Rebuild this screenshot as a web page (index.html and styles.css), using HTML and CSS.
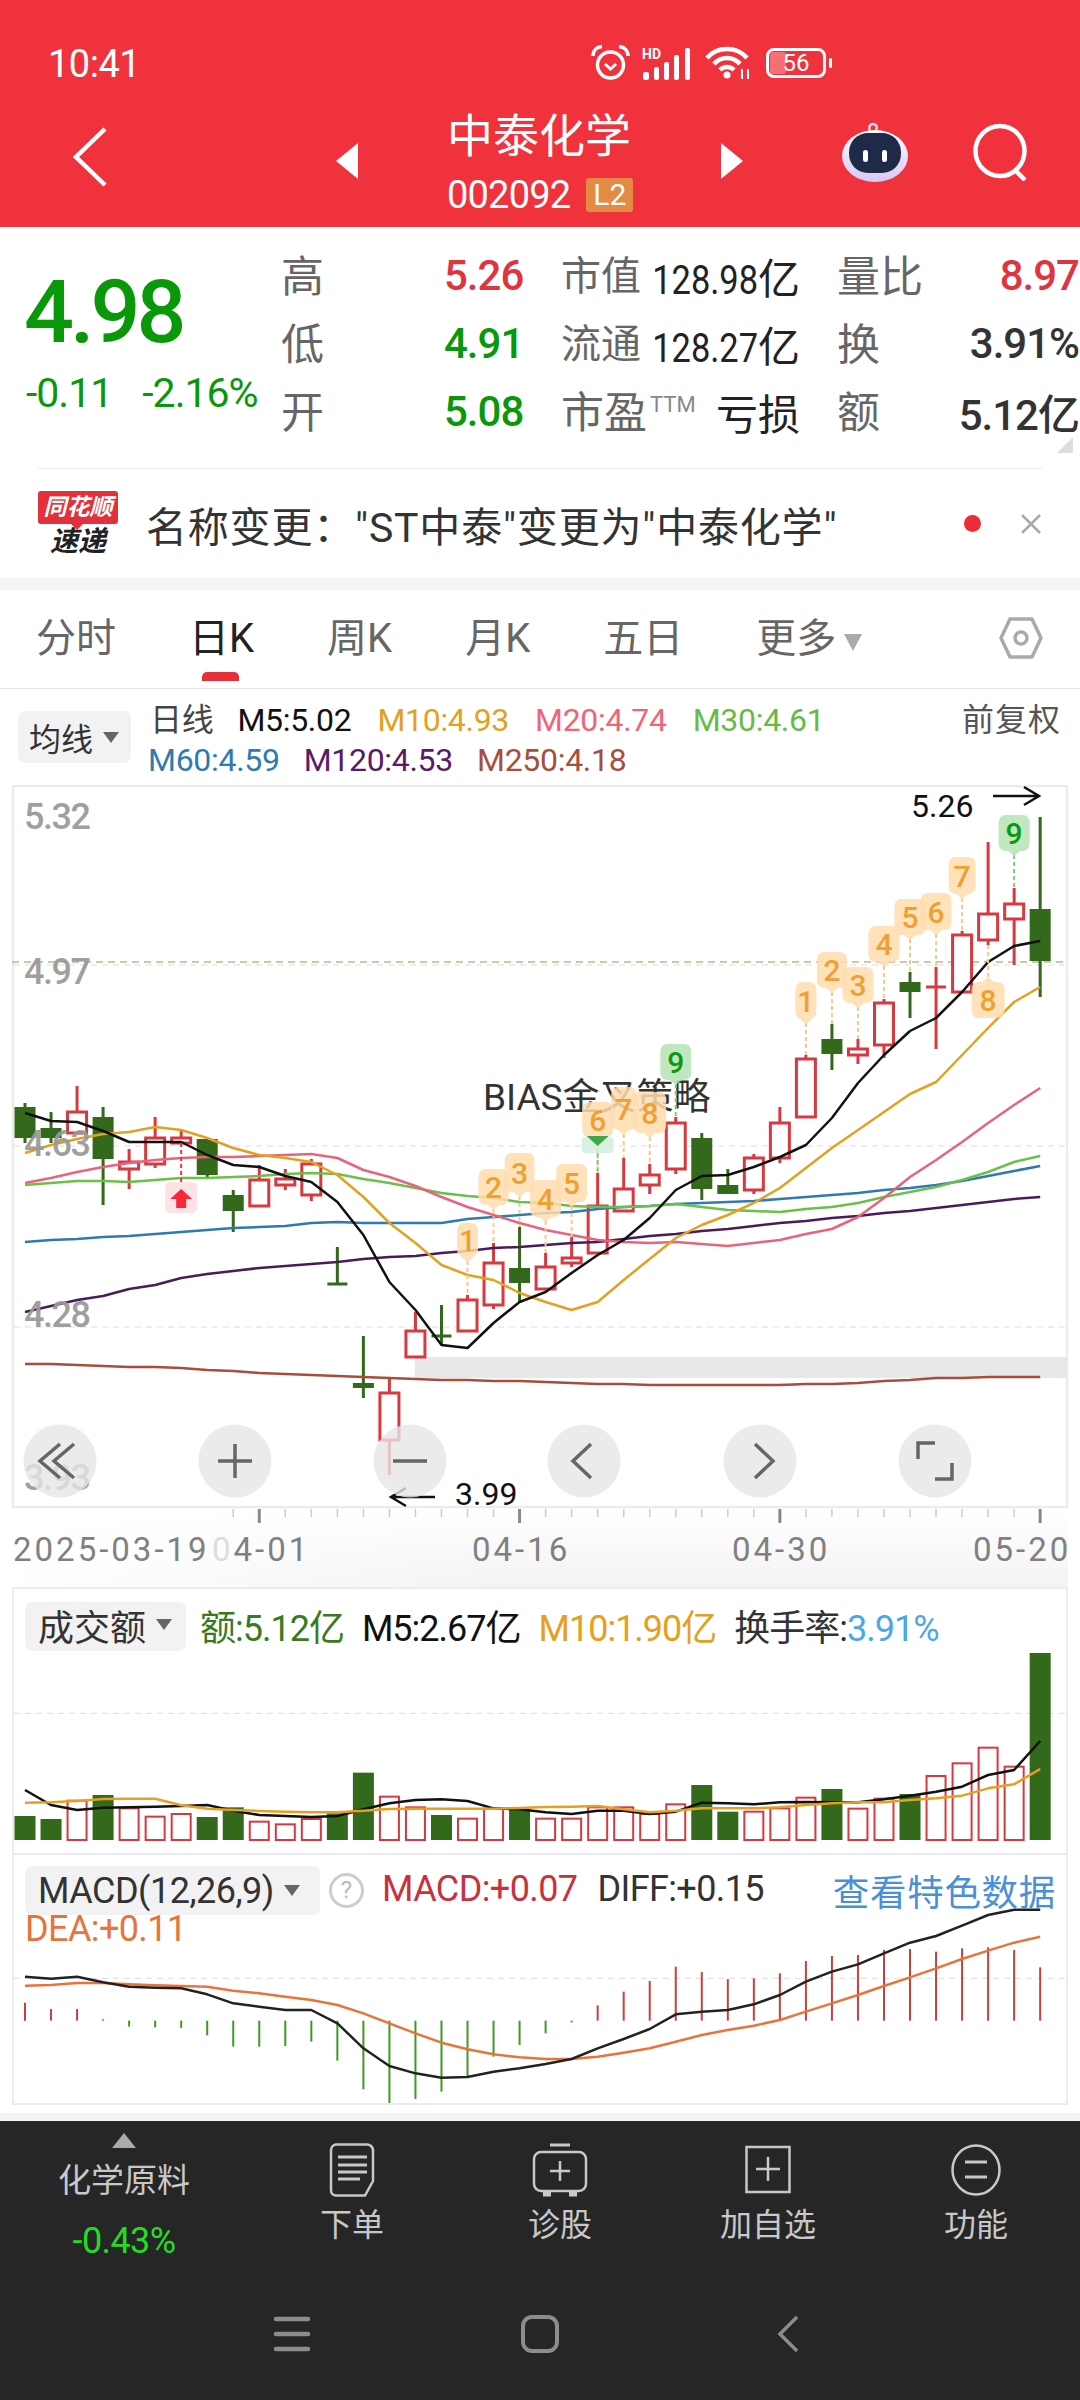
FILE: index.html
```html
<!DOCTYPE html>
<html lang="zh-CN">
<head>
    <meta charset="UTF-8">
    <meta name="viewport" content="width=device-width, initial-scale=1.0">
    <title>中泰化学 002092</title>
    <link rel="stylesheet" href="styles.css">
</head>
<body>
    <header class="top">
        <div class="status-bar">
            <span class="clock">10:41</span>
            <div class="status-icons">
                <svg width="39" height="36" viewBox="0 0 39 36" fill="none" stroke="#fff">
                    <circle cx="19.5" cy="20" r="13" stroke-width="3.5"/>
                    <path d="M14 19l5.5 5 5.5-5" stroke-width="3"/>
                    <path d="M2 11C2 5 6 2 11 1.5M37 11c0-6-4-9-9-9.5" stroke-width="3.5"/>
                </svg>
                <svg width="51" height="33" viewBox="0 0 51 33" fill="#fff">
                    <text x="0" y="12" class="hd">HD</text>
                    <rect x="1" y="25" width="6" height="8" rx="2"/>
                    <rect x="12" y="20" width="5" height="13" rx="2"/>
                    <rect x="22" y="15" width="5" height="18" rx="2"/>
                    <rect x="32" y="8" width="5" height="25" rx="2"/>
                    <rect x="43" y="1" width="5" height="32" rx="2"/>
                </svg>
                <svg width="47" height="34" viewBox="0 0 47 34" fill="none" stroke="#fff" stroke-width="4.5">
                    <path d="M2 12C12 0 32 0 42 12"/>
                    <path d="M9 18c7-8 19-8 26 0"/>
                    <path d="M15 24c4-4 10-4 14 0"/>
                    <circle cx="22" cy="29" r="3.5" fill="#fff" stroke="none"/>
                    <path d="M37 23v10M43 23v10" stroke-width="2"/>
                </svg>
                <div class="battery"><span class="battery-fill"></span><span class="battery-num">56</span></div>
            </div>
        </div>
        <div class="nav-bar">
            <svg class="back" width="36" height="60" viewBox="0 0 36 60" fill="none" stroke="#fff" stroke-width="4.5">
                <path d="M33 2L4 30l29 28"/>
            </svg>
            <span class="tri-left"></span>
            <div class="stock-title">
                <div class="stock-name">中泰化学</div>
                <div class="stock-code">002092<span class="level-tag">L2</span></div>
            </div>
            <span class="tri-right"></span>
            <div class="nav-right">
                <svg width="66" height="60" viewBox="0 0 66 60">
                    <defs>
                        <linearGradient id="robotShell" x1="0" y1="0" x2="0" y2="1">
                            <stop offset="0" stop-color="#ffffff"/>
                            <stop offset="1" stop-color="#d5c8f5"/>
                        </linearGradient>
                    </defs>
                    <path d="M28 9c-2-4 0-7 3-7s5 3 3 6" fill="none" stroke="#f6dce2" stroke-width="2.5"/>
                    <ellipse cx="33" cy="34" rx="33" ry="26" fill="url(#robotShell)"/>
                    <rect x="7" y="11" width="52" height="40" rx="19" fill="#1e2a48"/>
                    <rect x="21" y="28" width="5" height="12" rx="2.5" fill="#fff"/>
                    <rect x="40" y="28" width="5" height="12" rx="2.5" fill="#fff"/>
                </svg>
                <svg width="56" height="58" viewBox="0 0 56 58" fill="none" stroke="#fff" stroke-width="4.5">
                    <ellipse cx="27" cy="28" rx="24.5" ry="25"/>
                    <path d="M42 47l10 10"/>
                </svg>
            </div>
        </div>
    </header>

    <section class="quote">
        <div class="quote-main">
            <div class="quote-left">
                <div class="last-price">4.98</div>
                <div class="price-change"><span>-0.11</span><span>-2.16%</span></div>
            </div>
            <div class="quote-grid">
                <span class="q-label">高</span><span class="q-num up">5.26</span>
                <div class="q-pair"><span class="q-label small">市值</span><span class="q-val"><span class="narrow">128.98</span>亿</span></div>
                <div class="q-pair last"><span class="q-label">量比</span><span class="q-num up">8.97</span></div>

                <span class="q-label">低</span><span class="q-num down">4.91</span>
                <div class="q-pair"><span class="q-label small">流通</span><span class="q-val"><span class="narrow">128.27</span>亿</span></div>
                <div class="q-pair last"><span class="q-label">换</span><span class="q-num">3.91%</span></div>

                <span class="q-label">开</span><span class="q-num down">5.08</span>
                <div class="q-pair"><span class="q-label">市盈<sup class="ttm">TTM</sup></span><span class="q-val">亏损</span></div>
                <div class="q-pair last"><span class="q-label">额</span><span class="q-num">5.12亿</span></div>
            </div>
            <span class="corner-mark"></span>
        </div>
        <div class="quote-rule"></div>
        <div class="news">
            <div class="news-logo">
                <div class="news-logo-tag">同花顺</div>
                <div class="news-logo-sub">速递</div>
            </div>
            <div class="news-text">名称变更："ST中泰"变更为"中泰化学"</div>
            <span class="news-dot"></span>
            <svg class="news-close" width="20" height="20" viewBox="0 0 20 20" stroke="#aaa" stroke-width="2.5">
                <path d="M1 1l18 18M19 1L1 19"/>
            </svg>
        </div>
    </section>

    <div class="gap"></div>

    <nav class="tabs">
        <span class="tab">分时</span>
        <span class="tab active">日K</span>
        <span class="tab">周K</span>
        <span class="tab">月K</span>
        <span class="tab">五日</span>
        <span class="tab more">更多<i class="tab-caret"></i></span>
        <svg class="tab-gear" width="44" height="42" viewBox="0 0 44 42" fill="none" stroke="#aaa" stroke-width="3.5">
            <path d="M11 2h22l9 19-9 19H11L2 21z" stroke-linejoin="round"/>
            <circle cx="22" cy="21" r="6"/>
        </svg>
    </nav>

    <div class="ma-legend">
        <div class="chip ma-chip">均线<i class="chip-caret"></i></div>
        <div class="ma-lines">
            <div class="ma-row">
                <span class="ma-title">日线</span>
                <span class="c-m5">M5:5.02</span>
                <span class="c-m10">M10:4.93</span>
                <span class="c-m20">M20:4.74</span>
                <span class="c-m30">M30:4.61</span>
                <span class="adjust">前复权</span>
            </div>
            <div class="ma-row second">
                <span class="c-m60">M60:4.59</span>
                <span class="c-m120">M120:4.53</span>
                <span class="c-m250">M250:4.18</span>
            </div>
        </div>
    </div>

    <svg class="kline" width="1080" height="802" viewBox="0 785 1080 802">
        <defs>
            <linearGradient id="axisFadeY" x1="0" y1="0" x2="0" y2="1">
                <stop offset="0" stop-color="#ffffff"/>
                <stop offset="1" stop-color="#f3f3f3"/>
            </linearGradient>
            <linearGradient id="axisFadeX" x1="0" y1="0" x2="1" y2="0">
                <stop offset="0" stop-color="#ffffff"/>
                <stop offset="1" stop-color="#ffffff" stop-opacity="0"/>
            </linearGradient>
        </defs>
        <rect x="0" y="1509" width="1068" height="78" fill="url(#axisFadeY)"/>
        <rect x="0" y="1509" width="500" height="78" fill="url(#axisFadeX)"/>
        <rect class="frame" x="13" y="786" width="1054" height="721"/>
        <rect class="band" x="415" y="1357" width="652" height="21"/>
        <line class="grid-line" x1="14" x2="1066" y1="965" y2="965"/>
        <line class="grid-line" x1="14" x2="1066" y1="1146" y2="1146"/>
        <line class="grid-line" x1="14" x2="1066" y1="1327" y2="1327"/>
        <line class="price-line" x1="12" x2="1068" y1="962" y2="962"/>
        <g id="kCandles"></g>
        <g id="kLines"></g>
        <text class="strategy" x="483" y="1110">BIAS金叉策略</text>
        <g id="kMarkers"></g>
        <text class="axis" x="24" y="829">5.32</text>
        <text class="axis" x="24" y="984">4.97</text>
        <text class="axis" x="24" y="1156">4.63</text>
        <text class="axis" x="24" y="1327">4.28</text>
        <text class="axis" x="24" y="1490">3.93</text>
        <text class="extreme" x="911" y="817">5.26</text>
        <path class="arrow" d="M993 796h46m-15-9l15 9-15 9"/>
        <text class="extreme" x="455" y="1505">3.99</text>
        <path class="arrow" d="M435 1497h-44m15-9l-15 9 15 9"/>

        <g class="zoom-btn"><circle cx="60" cy="1461" r="36.5"/><path d="M74 1444l-20 17 20 17M60 1444l-20 17 20 17"/></g>
        <g class="zoom-btn"><circle cx="235" cy="1461" r="36.5"/><path d="M218 1461h34M235 1444v34"/></g>
        <g class="zoom-btn"><circle cx="410" cy="1461" r="36.5"/><path d="M393 1461h34"/></g>
        <g class="zoom-btn"><circle cx="584" cy="1461" r="36.5"/><path d="M591 1444l-18 17 18 17"/></g>
        <g class="zoom-btn"><circle cx="760" cy="1461" r="36.5"/><path d="M755 1444l18 17-18 17"/></g>
        <g class="zoom-btn"><circle cx="935" cy="1461" r="36.5"/><path d="M918 1459v-16h17M952 1463v16h-17"/></g>

        <g id="kTicks"></g>
        <text class="date" x="13" y="1561">2025-03-19</text>
        <text class="date" x="212" y="1561"><tspan class="date-fade">0</tspan>4-01</text>
        <text class="date" x="472" y="1561">04-16</text>
        <text class="date" x="732" y="1561">04-30</text>
        <text class="date" x="973" y="1561">05-20</text>
    </svg>

    <section class="panel">
        <svg id="volumeChart" width="1052" height="264" viewBox="14 1589 1052 264"></svg>
        <div class="panel-head">
            <div class="chip panel-chip">成交额<i class="chip-caret"></i></div>
            <span class="c-vol">额:5.12亿</span>
            <span class="c-m5">M5:2.67亿</span>
            <span class="c-m10">M10:1.90亿</span>
            <span class="c-turn">换手率:<b class="c-rate">3.91%</b></span>
        </div>
    </section>

    <section class="panel macd">
        <svg id="macdChart" width="1052" height="248" viewBox="14 1855 1052 248"></svg>
        <div class="panel-head macd-head">
            <div class="chip panel-chip">MACD(12,26,9)<i class="chip-caret"></i></div>
            <span class="help">?</span>
            <span class="c-macd">MACD:+0.07</span>
            <span class="c-diff">DIFF:+0.15</span>
            <a class="special-data">查看特色数据</a>
        </div>
        <div class="c-dea">DEA:+0.11</div>
    </section>

    <div class="panel-end"></div>
    <div class="gap thin"></div>

    <footer class="bottom">
        <div class="actions">
            <div class="sector">
                <i class="sector-caret"></i>
                <div class="sector-name">化学原料</div>
                <div class="sector-change">-0.43%</div>
            </div>
            <div class="action">
                <svg width="46" height="54" viewBox="0 0 46 54" fill="none" stroke="#c8c8c8" stroke-width="2.5">
                    <path d="M7 1.5h31a6 6 0 0 1 6 6V38l-8 14.5H7a5 5 0 0 1-5-5v-40a6 6 0 0 1 5-6z"/>
                    <path d="M9 14h29M9 22h29M9 29h29M9 36h22" stroke-width="3"/>
                </svg>
                <span>下单</span>
            </div>
            <div class="action">
                <svg width="56" height="54" viewBox="0 0 56 54" fill="none" stroke="#c8c8c8" stroke-width="2.5">
                    <path d="M18 2h20" stroke-width="3"/>
                    <rect x="2" y="9" width="52" height="39" rx="7"/>
                    <path d="M18 28h20M28 18v20"/>
                    <path d="M11 51h8M37 51h8" stroke-width="5"/>
                </svg>
                <span>诊股</span>
            </div>
            <div class="action">
                <svg width="46" height="54" viewBox="0 0 46 54" fill="none" stroke="#c8c8c8" stroke-width="2.5">
                    <rect x="1.5" y="4" width="43" height="45"/>
                    <path d="M11 26h24M23 14v24"/>
                </svg>
                <span>加自选</span>
            </div>
            <div class="action">
                <svg width="50" height="54" viewBox="0 0 50 54" fill="none" stroke="#c8c8c8" stroke-width="2.5">
                    <ellipse cx="25" cy="27" rx="23.5" ry="24.5"/>
                    <path d="M14 19h22M14 34h22" stroke-width="3"/>
                </svg>
                <span>功能</span>
            </div>
        </div>
        <div class="sys-nav">
            <svg width="38" height="36" viewBox="0 0 38 36" stroke="#8c8c8c" stroke-width="4.5" stroke-linecap="round">
                <path d="M3 3h32M3 18h32M3 33h32"/>
            </svg>
            <svg width="38" height="38" viewBox="0 0 38 38" fill="none" stroke="#8c8c8c" stroke-width="4">
                <rect x="2" y="2" width="34" height="34" rx="9"/>
            </svg>
            <svg width="22" height="38" viewBox="0 0 22 38" fill="none" stroke="#8c8c8c" stroke-width="3.5">
                <path d="M20 2L3 19l17 17"/>
            </svg>
        </div>
    </footer>

    <script src="chart.js"></script>
</body>
</html>
```

FILE: styles.css
```css
* {
    box-sizing: border-box;
}

html, body {
    margin: 0;
    padding: 0;
}

body {
    width: 1080px;
    height: 2400px;
    overflow: hidden;
    background-color: #fff;
    font-family: Roboto, "Noto Sans CJK SC", sans-serif;
    color: #333;
}

i {
    font-style: normal;
}

/* red header */
.top {
    height: 227px;
    background-color: #f0323c;
    color: #fff;
}

.status-bar {
    display: flex;
    height: 86px;
    padding: 44px 0 0 48px;
}

.clock {
    width: 543px;
    font-size: 38px;
    line-height: 40px;
    letter-spacing: -0.5px;
}

.status-icons {
    display: flex;
    align-items: center;
    gap: 12px;
    height: 38px;
}

.hd {
    font-size: 14px;
    font-weight: 700;
}

.battery {
    position: relative;
    width: 60px;
    height: 30px;
    margin-left: 2px;
    border: 3px solid #fff;
    border-radius: 8px;
}

.battery::after {
    content: "";
    position: absolute;
    right: -9px;
    top: 7px;
    width: 3px;
    height: 10px;
    background-color: #fff;
    border-radius: 2px;
}

.battery-fill {
    position: absolute;
    left: 1px;
    top: 1px;
    bottom: 1px;
    width: 16px;
    background-color: rgba(255, 255, 255, 0.3);
    border-radius: 3px;
}

.battery-num {
    position: relative;
    display: block;
    text-align: center;
    font-size: 24px;
    line-height: 24px;
}

.nav-bar {
    display: grid;
    grid-template-columns: 336px 22px 363px 22px 337px;
    align-items: center;
    height: 141px;
}

.back {
    margin-left: 72px;
}

.tri-left, .tri-right {
    width: 0;
    height: 0;
    margin-top: 8px;
    border-top: 18px solid transparent;
    border-bottom: 18px solid transparent;
}

.tri-left {
    border-right: 22px solid #fff;
}

.tri-right {
    border-left: 22px solid #fff;
}

.stock-title {
    padding: 9px 0 0 89px;
}

.stock-name {
    font-size: 46px;
    line-height: 54px;
}

.stock-code {
    display: flex;
    align-items: center;
    gap: 16px;
    margin-top: 14px;
    font-size: 38px;
    line-height: 36px;
    letter-spacing: -0.8px;
}

.level-tag {
    width: 47px;
    height: 34px;
    border-radius: 3px;
    background-color: #e38b45;
    text-align: center;
    font-size: 30px;
    line-height: 34px;
    letter-spacing: 0;
}

.nav-right {
    display: flex;
    align-items: center;
    gap: 65px;
    padding-left: 99px;
    margin-bottom: 10px;
}

/* quote block */
.quote-main {
    position: relative;
    display: flex;
    height: 241px;
}

.quote-left {
    width: 281px;
    padding: 40px 0 0 24px;
    color: #089808;
}

.last-price {
    font-size: 88px;
    line-height: 90px;
    font-weight: 500;
    letter-spacing: -4px;
}

.price-change {
    display: flex;
    gap: 30px;
    margin-top: 18px;
    padding-left: 2px;
    font-size: 41px;
    line-height: 36px;
    letter-spacing: -1px;
}

.quote-grid {
    display: grid;
    grid-template-columns: 163px 117px 239px 279px;
    grid-auto-rows: 68px;
    align-items: center;
    padding-top: 12px;
}

.q-label {
    font-size: 43px;
    color: #666;
    white-space: nowrap;
}

.q-label.small {
    font-size: 40px;
}

.ttm {
    margin-left: 3px;
    font-size: 22px;
    vertical-align: 16px;
    line-height: 0;
    color: #888;
}

.q-num {
    margin-top: 5px;
    font-size: 42px;
    font-weight: 500;
    letter-spacing: -1px;
}

.q-val {
    margin-top: 5px;
    font-size: 42px;
    color: #222;
    white-space: nowrap;
}

/* digits here are squeezed in the app, no condensed face is installed */
.narrow {
    display: inline-block;
    margin-left: -22px;
    font-size: 41px;
    transform: scaleX(0.84);
    transform-origin: right center;
}

.q-pair {
    display: flex;
    justify-content: space-between;
    align-items: center;
}

.q-pair.last {
    padding-left: 37px;
}

.up {
    color: #e0343e;
}

.down {
    color: #089808;
}

.corner-mark {
    position: absolute;
    right: 7px;
    top: 210px;
    width: 16px;
    height: 16px;
    background-color: #ddd;
    clip-path: polygon(100% 0, 100% 100%, 0 100%);
}

.quote-rule {
    height: 1px;
    margin: 0 38px;
    background-color: #eaeaea;
}

.news {
    display: flex;
    align-items: center;
    height: 109px;
    padding: 0 39px 0 38px;
}

.news-logo {
    width: 80px;
    text-align: center;
    font-weight: 700;
    font-style: italic;
}

.news-logo-tag {
    position: relative;
    height: 33px;
    border-radius: 3px;
    background-color: #e2313a;
    color: #fff;
    font-size: 23px;
    line-height: 33px;
    white-space: nowrap;
}

.news-logo-tag::after {
    content: "";
    position: absolute;
    left: 33px;
    bottom: -6px;
    border-top: 6px solid #e2313a;
    border-left: 6px solid transparent;
    border-right: 6px solid transparent;
}

.news-logo-sub {
    margin-top: 3px;
    font-size: 28px;
    line-height: 30px;
    color: #222;
}

.news-text {
    flex: 1;
    margin-left: 28px;
    font-size: 41px;
    letter-spacing: 0.8px;
    white-space: nowrap;
}

.news-dot {
    width: 17px;
    height: 17px;
    margin-right: 40px;
    border-radius: 50%;
    background-color: #ee2c36;
}

.gap {
    height: 12px;
    background-color: #f4f4f4;
}

.gap.thin {
    height: 8px;
}

/* period tabs */
.tabs {
    position: relative;
    display: flex;
    align-items: center;
    gap: 73px;
    height: 99px;
    padding: 0 0 8px 36px;
    border-bottom: 1px solid #e6e6e6;
    font-size: 40px;
    color: #666;
}

.tab.active {
    position: relative;
    color: #222;
}

.tab.active::after {
    content: "";
    position: absolute;
    left: 13px;
    bottom: -17px;
    width: 37px;
    height: 9px;
    border-radius: 5px 5px 0 0;
    background-color: #e5303a;
}

.tab-caret {
    display: inline-block;
    margin-left: 8px;
    vertical-align: 1px;
    border-top: 17px solid #aaa;
    border-left: 9px solid transparent;
    border-right: 9px solid transparent;
}

.tab-gear {
    position: absolute;
    right: 37px;
    top: 27px;
}

/* moving average legend */
.ma-legend {
    display: flex;
    gap: 17px;
    height: 96px;
    padding: 11px 19px 0 18px;
}

.chip {
    display: flex;
    align-items: center;
    border-radius: 7px;
    background-color: #f2f2f2;
}

.ma-chip {
    width: 113px;
    height: 52px;
    margin-top: 11px;
    padding-left: 11px;
    font-size: 32px;
}

.chip-caret {
    margin-left: 10px;
    border-top: 11px solid #666;
    border-left: 8px solid transparent;
    border-right: 8px solid transparent;
}

.ma-lines {
    flex: 1;
    font-size: 32px;
    line-height: 40px;
    letter-spacing: -0.3px;
}

.ma-row {
    display: flex;
    gap: 26px;
    white-space: nowrap;
}

.ma-row.second {
    gap: 24px;
}

.ma-title {
    margin: 0 -2px 0 2px;
    color: #444;
}

.adjust {
    margin-left: auto;
    color: #555;
    letter-spacing: 1px;
}

.c-m5 { color: #111; }
.c-m10 { color: #e5a01e; }
.c-m20 { color: #f0647a; }
.c-m30 { color: #66bb44; }
.c-m60 { color: #2f7ab0; }
.c-m120 { color: #5a1a66; }
.c-m250 { color: #a84e3a; }

/* k-line chart */
.kline, #volumeChart, #macdChart {
    display: block;
}

.frame {
    fill: none;
    stroke: #ececec;
    stroke-width: 2.5;
}

.band {
    fill: #e8e8e8;
}

.grid-line {
    stroke: #ddd;
    stroke-width: 1;
    stroke-dasharray: 6 5;
}

.price-line {
    stroke: #c6b48e;
    stroke-width: 1.5;
    stroke-dasharray: 7 5;
}

.ma-line {
    fill: none;
    stroke-width: 2.5;
    stroke-linejoin: round;
}

.strategy {
    font-size: 37px;
    fill: #333;
}

.axis {
    font-size: 36px;
    font-weight: 500;
    fill: #999;
    fill-opacity: 0.95;
    letter-spacing: -1.5px;
}

.extreme {
    font-size: 32px;
    fill: #111;
}

.arrow {
    fill: none;
    stroke: #111;
    stroke-width: 2.5;
}

.marker-text {
    font-size: 30px;
    font-weight: 500;
    text-anchor: middle;
}

.zoom-btn circle {
    fill: #e6e6e6;
    fill-opacity: 0.8;
}

.zoom-btn path {
    fill: none;
    stroke: #666;
    stroke-width: 3.5;
}

.date {
    font-size: 33px;
    fill: #808080;
    letter-spacing: 3px;
}

.date-fade {
    fill: #ddd;
}

/* sub charts */
.panel {
    position: relative;
    width: 1056px;
    margin-left: 12px;
    border: 2px solid #ececec;
    border-bottom: 0;
}

.panel.macd {
    border-bottom: 2px solid #ececec;
}

.panel-end {
    height: 8px;
}

.panel-head {
    position: absolute;
    left: 11px;
    top: 10px;
    display: flex;
    align-items: center;
    font-size: 36px;
    letter-spacing: -1px;
    white-space: nowrap;
}

.panel-head > span {
    padding-bottom: 3px;
}

.panel-chip {
    height: 49px;
    padding: 0 14px 4px 13px;
    margin-right: 14px;
    font-size: 36px;
    letter-spacing: 0;
    color: #333;
}

.panel-head span + span {
    margin-left: 18px;
}

.c-vol { color: #3a7a1e; }
.c-turn { color: #333; }
.c-rate { color: #4aa8e8; font-weight: 400; }

.macd-head {
    top: 9px;
    width: 1030px;
    letter-spacing: -0.6px;
}

.macd-head span + span {
    margin-left: 20px;
}

.macd-head .panel-chip {
    width: 295px;
    margin-right: 9px;
    padding: 0;
    padding-left: 13px;
    letter-spacing: -0.5px;
}

.help {
    width: 35px;
    height: 35px;
    margin-right: -2px;
    border: 3px solid #ccc;
    border-radius: 50%;
    color: #bbb;
    text-align: center;
    font-size: 24px;
    line-height: 29px;
    letter-spacing: 0;
}

.c-macd { color: #c8323c; }
.c-diff { color: #333; }

.special-data {
    margin-left: auto;
    margin-right: -1px;
    color: #4a90d9;
    font-size: 36.5px;
    letter-spacing: 0.7px;
}

.c-dea {
    position: absolute;
    left: 11px;
    top: 55px;
    color: #e8743c;
    font-size: 36px;
    line-height: 38px;
    letter-spacing: -0.6px;
}

/* dark footer */
.bottom {
    height: 279px;
    background-color: #262626;
    color: #c8c8c8;
}

.actions {
    display: grid;
    grid-template-columns: 248px repeat(4, 208px);
    height: 160px;
}

.sector {
    text-align: center;
}

.sector-caret {
    display: block;
    width: 0;
    margin: 12px auto 0;
    border-bottom: 15px solid #aaa;
    border-left: 12px solid transparent;
    border-right: 12px solid transparent;
}

.sector-name {
    margin-top: 12px;
    font-size: 33px;
    line-height: 42px;
}

.sector-change {
    margin-top: 18px;
    color: #22dd22;
    font-size: 36px;
    line-height: 42px;
    letter-spacing: -0.6px;
}

.action {
    display: flex;
    flex-direction: column;
    align-items: center;
    gap: 7px;
    padding-top: 22px;
    font-size: 32px;
    line-height: 42px;
}

.sys-nav {
    display: grid;
    grid-template-columns: repeat(3, 248px);
    justify-content: center;
    justify-items: center;
    align-items: center;
    height: 54px;
    margin-top: 26px;
}
```

FILE: chart.js
```js
// chart data is read in page pixels so the svg viewBoxes line up with the layout
const STEP = 26.03;
const X = i => 25 + STEP * i;

const RED = '#d8383f';
const GREEN = '#33691a';

// [wick top, body top, body bottom, wick bottom, up?]
const candles = [
    [1103, 1107, 1138, 1143, 0], [1112, 1128, 1138, 1143, 0], [1086, 1112, 1133, 1133, 1],
    [1107, 1117, 1159, 1205, 0], [1149, 1162, 1169, 1189, 1], [1117, 1138, 1164, 1168, 1],
    [1129, 1138, 1143, 1143, 1], [1139, 1139, 1175, 1179, 0], [1190, 1195, 1211, 1232, 0],
    [1165, 1180, 1206, 1206, 1], [1169, 1179, 1185, 1190, 1], [1159, 1164, 1195, 1201, 1],
    [1247, 1284, 1284, 1284, 0], [1336, 1383, 1388, 1398, 0], [1378, 1393, 1440, 1475, 1],
    [1312, 1331, 1357, 1357, 1], [1305, 1336, 1336, 1345, 0], [1295, 1300, 1331, 1331, 1],
    [1243, 1263, 1305, 1309, 1], [1227, 1268, 1283, 1303, 0], [1253, 1267, 1289, 1289, 1],
    [1237, 1258, 1263, 1267, 1], [1173, 1206, 1253, 1253, 1], [1158, 1189, 1211, 1211, 1],
    [1164, 1175, 1185, 1194, 1], [1117, 1123, 1169, 1174, 1], [1133, 1138, 1189, 1200, 0],
    [1169, 1185, 1194, 1194, 0], [1154, 1158, 1190, 1194, 1], [1107, 1123, 1158, 1163, 1],
    [1055, 1059, 1117, 1117, 1], [1024, 1039, 1054, 1070, 0], [1039, 1049, 1055, 1064, 1],
    [999, 1003, 1045, 1058, 1], [972, 982, 992, 1018, 0], [967, 987, 987, 1049, 1],
    [931, 935, 992, 992, 1], [842, 914, 940, 945, 1], [888, 904, 919, 965, 1],
    [817, 909, 961, 997, 0]
];

const maLines = [
    ['#a84c3c', [1364, 1364, 1365, 1366, 1367, 1367, 1368, 1370, 1371, 1373, 1374, 1375, 1376, 1377, 1378, 1379, 1380, 1380, 1381, 1381, 1382, 1383, 1384, 1384, 1385, 1385, 1385, 1385, 1385, 1385, 1384, 1384, 1383, 1381, 1380, 1378, 1378, 1377, 1377, 1377]],
    ['#4a1a5a', [1312, 1306, 1300, 1296, 1289, 1285, 1278, 1274, 1271, 1268, 1266, 1264, 1262, 1259, 1257, 1256, 1253, 1251, 1248, 1247, 1245, 1243, 1242, 1239, 1236, 1234, 1231, 1229, 1226, 1223, 1221, 1218, 1216, 1213, 1211, 1208, 1205, 1202, 1199, 1197]],
    ['#2f7aae', [1242, 1240, 1239, 1237, 1236, 1234, 1232, 1230, 1228, 1227, 1226, 1223, 1222, 1223, 1223, 1223, 1223, 1219, 1217, 1215, 1213, 1212, 1209, 1207, 1206, 1204, 1203, 1202, 1201, 1199, 1197, 1195, 1193, 1190, 1188, 1185, 1181, 1176, 1171, 1166]],
    ['#6bbf4b', [1185, 1183, 1181, 1181, 1182, 1180, 1178, 1178, 1177, 1176, 1174, 1173, 1174, 1179, 1183, 1188, 1193, 1196, 1198, 1202, 1203, 1206, 1207, 1207, 1206, 1204, 1207, 1210, 1211, 1212, 1209, 1207, 1203, 1197, 1192, 1187, 1180, 1172, 1162, 1156]],
    ['#e8647a', [1183, 1178, 1172, 1167, 1163, 1160, 1158, 1157, 1157, 1156, 1155, 1154, 1158, 1170, 1177, 1186, 1197, 1207, 1215, 1223, 1230, 1235, 1240, 1242, 1243, 1242, 1244, 1246, 1243, 1240, 1234, 1229, 1217, 1198, 1177, 1160, 1142, 1123, 1105, 1088]],
    ['#e5a020', [1153, 1145, 1139, 1134, 1132, 1127, 1130, 1138, 1148, 1155, 1158, 1162, 1175, 1197, 1223, 1243, 1265, 1275, 1280, 1293, 1302, 1310, 1302, 1280, 1259, 1238, 1225, 1215, 1203, 1188, 1168, 1148, 1130, 1112, 1094, 1082, 1055, 1028, 1002, 987]],
    ['#111', [1113, 1121, 1122, 1131, 1142, 1142, 1142, 1155, 1165, 1167, 1176, 1182, 1202, 1235, 1282, 1310, 1345, 1348, 1323, 1302, 1292, 1273, 1255, 1240, 1218, 1190, 1176, 1175, 1167, 1157, 1145, 1118, 1083, 1055, 1031, 1018, 992, 962, 946, 941], 3]
];

// [candle, top, bottom, label, width, green?]
const markers = [
    [17, 1223, 1257, '1', 21], [18, 1169, 1205, '2', 30], [19, 1153, 1192, '3', 30],
    [20, 1180, 1217, '4', 31], [21, 1164, 1202, '5', 31], [22, 1102, 1137, '6', 31],
    [23, 1087, 1130, '7', 25], [24, 1092, 1133, '8', 33], [25, 1044, 1080, '9', 31, 1],
    [30, 982, 1019, '1', 21], [31, 952, 988, '2', 30], [32, 967, 1003, '3', 31],
    [33, 926, 962, '4', 31], [34, 899, 935, '5', 31], [35, 893, 930, '6', 31],
    [36, 857, 894, '7', 27], [37, 982, 1018, '8', 33], [38, 815, 851, '9', 31, 1]
];

function polyline(points, color, width) {
    const pts = points.map((y, i) => X(i).toFixed(1) + ',' + y).join(' ');
    return `<polyline class="ma-line" points="${pts}" stroke="${color}"${width ? ` stroke-width="${width}"` : ''}/>`;
}

function drawCandles() {
    let out = '';
    candles.forEach(([wt, bt, bb, wb, up], i) => {
        const x = X(i);
        const color = up ? RED : GREEN;
        out += `<line x1="${x}" x2="${x}" y1="${wt}" y2="${wb}" stroke="${color}" stroke-width="3"/>`;
        if (bt === bb) {
            out += `<line x1="${x - 10}" x2="${x + 10}" y1="${bt}" y2="${bt}" stroke="${color}" stroke-width="3"/>`;
        } else if (up) {
            out += `<rect x="${x - 9.5}" y="${bt}" width="19" height="${bb - bt}" fill="#fff" stroke="${RED}" stroke-width="3"/>`;
        } else {
            out += `<rect x="${x - 10.5}" y="${bt}" width="21" height="${bb - bt}" fill="${GREEN}"/>`;
        }
    });
    document.getElementById('kCandles').innerHTML = out;
    document.getElementById('kLines').innerHTML = maLines.map(([c, p, w]) => polyline(p, c, w)).join('');
}

function drawMarkers() {
    let out = '';
    markers.forEach(([i, top, bottom, label, w, green]) => {
        const x = X(i);
        const fill = green ? '#b5e3b5' : '#ffdcae';
        const text = green ? '#0a9a0a' : '#f0a030';
        const below = bottom >= candles[i][0];
        const lineFrom = below ? candles[i][3] : bottom + 4;
        const lineTo = below ? top : candles[i][0];
        out += `<line x1="${x}" x2="${x}" y1="${lineFrom}" y2="${lineTo}" stroke="${green ? '#7cc87c' : '#f5c98a'}" stroke-width="2" stroke-dasharray="4 3"/>`;
        out += `<rect x="${x - w / 2}" y="${top}" width="${w}" height="${bottom - top}" rx="7" fill="${fill}" fill-opacity="0.85"/>`;
        const tip = below ? top - 5 : bottom + 5;
        const base = below ? top : bottom;
        out += `<path d="M${x - 6} ${base}L${x} ${tip}L${x + 6} ${base}z" fill="${fill}" fill-opacity="0.85"/>`;
        out += `<text class="marker-text" x="${x}" y="${(top + bottom) / 2 + 11}" fill="${text}">${label}</text>`;
    });

    // buy arrow under candle 6, sell arrow on candle 22
    const buyX = X(6);
    out += `<line x1="${buyX}" x2="${buyX}" y1="1143" y2="1182" stroke="${RED}" stroke-width="2" stroke-dasharray="4 3"/>`;
    out += `<rect x="${buyX - 16}" y="1182" width="32" height="31" rx="5" fill="#fde3e6"/>`;
    out += `<path d="M${buyX} 1189l11 10h-6v9h-10v-9h-6z" fill="#f5283c"/>`;

    const sellX = X(22);
    out += `<rect x="${sellX - 16}" y="1137" width="32" height="16" rx="4" fill="#cfeeda" fill-opacity="0.8"/>`;
    out += `<path d="M${sellX - 11} 1136h22l-11 10z" fill="#3ca84a"/>`;
    out += `<line x1="${sellX}" x2="${sellX}" y1="1153" y2="1173" stroke="#7cc87c" stroke-width="2" stroke-dasharray="4 3"/>`;
    document.getElementById('kMarkers').innerHTML = out;
}

function drawTicks() {
    let out = '';
    for (let i = 8; i < 40; i++) {
        const x = X(i);
        const big = i % 10 === 9;
        out += `<line x1="${x}" x2="${x}" y1="1509" y2="${big ? 1523 : 1517}" stroke="${big ? '#888' : '#ccc'}" stroke-width="${big ? 3 : 1.5}"/>`;
    }
    document.getElementById('kTicks').innerHTML = out;
}

// volume and macd values were measured from a 3x crop, hence the /3
function drawVolume() {
    const y = z => 1570 + z / 3;
    const base = y(810);
    const tops = [738, 747, 692, 675, 715, 740, 732, 741, 712, 755, 763, 747, 730, 608, 680, 712, 735, 746, 716, 718, 746, 746, 712, 712, 732, 703, 645, 725, 725, 715, 683, 657, 716, 686, 672, 618, 580, 533, 590, 249];
    const m5 = [660, 705, 720, 713, 712, 710, 708, 705, 722, 735, 738, 741, 738, 718, 700, 690, 688, 693, 715, 718, 727, 732, 722, 722, 732, 725, 698, 700, 703, 697, 696, 697, 697, 688, 677, 665, 650, 615, 600, 513];
    const m10 = [698, 697, 693, 687, 686, 686, 706, 716, 720, 723, 725, 727, 727, 722, 717, 716, 716, 716, 716, 714, 711, 710, 708, 718, 727, 722, 715, 715, 715, 712, 705, 700, 697, 697, 690, 685, 677, 655, 643, 597];
    let out = `<line class="grid-line" x1="14" x2="1066" y1="${y(430)}" y2="${y(430)}"/>`;
    tops.forEach((z, i) => {
        const x = X(i);
        const up = candles[i][4];
        if (up) {
            out += `<rect x="${x - 9.5}" y="${y(z)}" width="19" height="${base - y(z)}" fill="#fff" stroke="${RED}" stroke-width="2"/>`;
        } else {
            out += `<rect x="${x - 10.5}" y="${y(z)}" width="21" height="${base - y(z)}" fill="${GREEN}"/>`;
        }
    });
    out += polyline(m5.map(y), '#111');
    out += polyline(m10.map(y), '#e5a020', 3);
    document.getElementById('volumeChart').innerHTML = out;
}

function drawMacd() {
    const y = z => 1860 + z / 3;
    const zero = y(482);
    const bars = [428, 447, 447, 478, 500, 502, 504, 526, 560, 560, 558, 545, 602, 688, 730, 717, 695, 650, 590, 555, 520, 487, 436, 395, 363, 320, 336, 357, 355, 340, 303, 288, 285, 270, 267, 275, 265, 262, 270, 322];
    const diff = [350, 356, 350, 367, 380, 383, 385, 403, 430, 440, 450, 450, 490, 565, 618, 640, 653, 651, 635, 625, 612, 597, 565, 537, 507, 463, 455, 450, 433, 405, 365, 335, 313, 280, 248, 228, 197, 165, 149, 149];
    const dea = [377, 375, 369, 369, 373, 376, 378, 380, 392, 400, 410, 420, 435, 460, 490, 520, 548, 568, 583, 592, 597, 597, 590, 578, 565, 545, 525, 510, 497, 480, 455, 430, 405, 378, 352, 325, 297, 272, 248, 230];
    let out = `<line class="grid-line" x1="14" x2="1066" y1="${y(355)}" y2="${y(355)}"/>`;
    bars.forEach((z, i) => {
        const x = X(i);
        out += `<line x1="${x}" x2="${x}" y1="${zero}" y2="${y(z)}" stroke="${z < 482 ? '#c8403c' : '#3f9a20'}" stroke-width="2"/>`;
    });
    out += polyline(dea.map(y), '#e8743c', 3);
    out += polyline(diff.map(y), '#222');
    document.getElementById('macdChart').innerHTML = out;
}

drawCandles();
drawMarkers();
drawTicks();
drawVolume();
drawMacd();
```
